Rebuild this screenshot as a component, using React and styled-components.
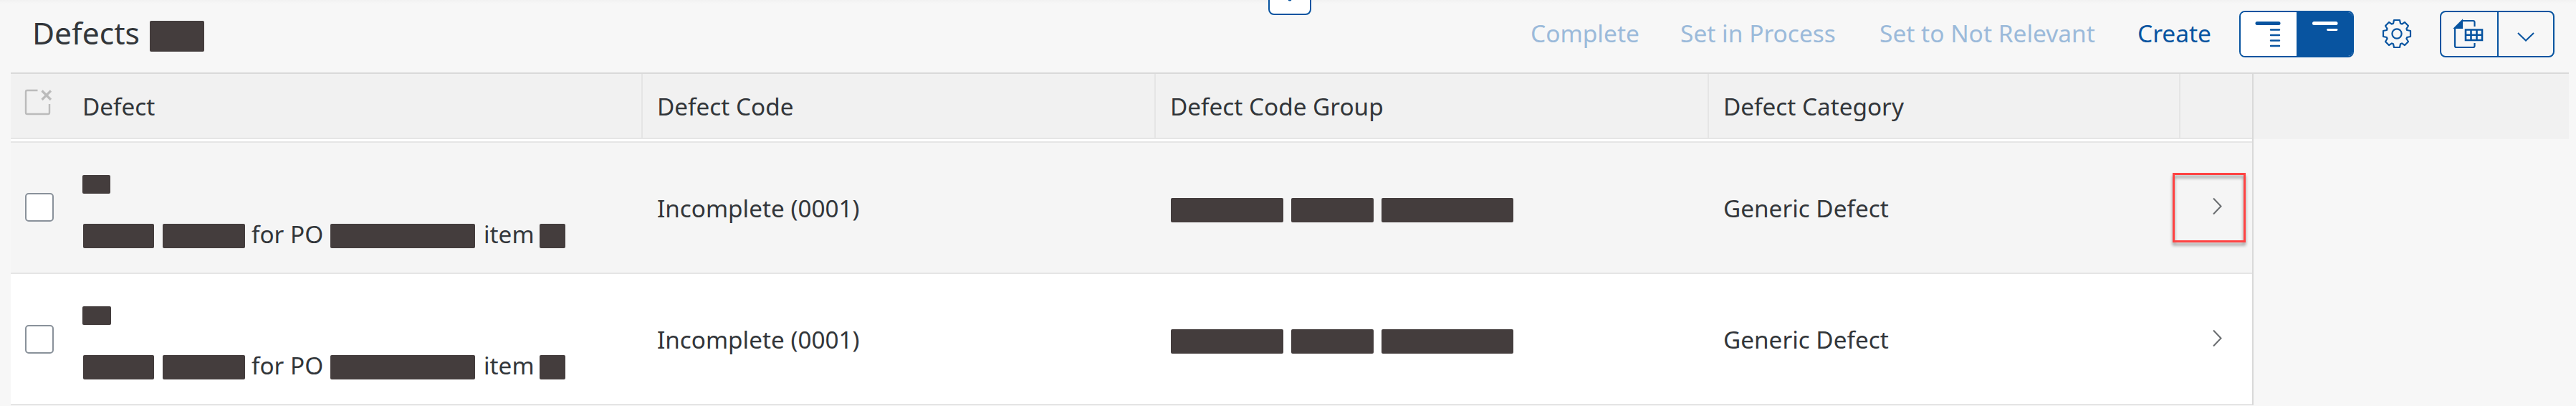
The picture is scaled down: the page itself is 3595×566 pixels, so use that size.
import React from "react";
import styled, { createGlobalStyle } from "styled-components";

const Global = createGlobalStyle`
  * { box-sizing: border-box; }
  body { margin: 0; background: #f7f7f7; color: #32363a; font-family: "Noto Sans", sans-serif; font-size: 33.3px; }
`;

const Page = styled.div`
  position: relative;
  height: 566px;
  overflow: hidden;
  padding-left: 15px;
  background: linear-gradient(#f2f2f2, #f7f7f7 5px);
`;

const PinButton = styled.div`
  position: absolute;
  left: 1770px;
  top: -39px;
  width: 60px;
  height: 60px;
  border: 2px solid #0854a0;
  border-radius: 8px;
  background: #fff;
`;

const Toolbar = styled.div`
  height: 101px;
  display: flex;
  align-items: flex-start;
  padding: 15px 30px 0 30px;
`;

const Title = styled.div`
  font-size: 42.6px;
  line-height: 60px;
  width: 164px;
  white-space: nowrap;
`;

const Redacted = styled.span`
  display: block;
  flex: none;
  width: ${(p) => p.$w}px;
  height: ${(p) => p.$h || 34}px;
  margin-left: ${(p) => p.$gap || 0}px;
  margin-top: ${(p) => p.$top || 0}px;
  border-radius: 2px;
  background: #443d3d;
`;

const Spacer = styled.div`
  flex: 1;
`;

const Action = styled.div`
  color: ${(p) => (p.$enabled ? "#0854a0" : "#9bbada")};
  width: ${(p) => p.$w}px;
  font-size: 33.5px;
  line-height: 62px;
  white-space: nowrap;
`;

const ButtonPair = styled.div`
  display: flex;
  width: 160px;
  height: 65px;
  border: 2px solid #0854a0;
  border-radius: 8px;
  overflow: hidden;
`;

const PairHalf = styled.div`
  flex: 1;
  display: flex;
  background: ${(p) => p.$bg || "transparent"};
  border-left: ${(p) => (p.$divided ? "2px solid #0854a0" : "none")};
`;

const GearSlot = styled.div`
  width: 120px;
  padding: 12px 0 0 40px;
`;

const Table = styled.div`
  display: grid;
  grid-template-columns: 3130px 440px;
`;

const HeaderRow = styled.div`
  display: flex;
  height: 93px;
  border-top: 2px solid #d9d9d9;
  border-bottom: 2px solid #e5e5e5;
  background: #f1f1f1;
  line-height: 90px;
`;

const HeaderFill = styled.div`
  height: 93px;
  background: #f1f1f1;
  border-top: 2px solid #d9d9d9;
`;

const Body = styled.div`
  border-right: 2px solid #d9d9d9;
  background: #fff;
  padding-top: 3px;
`;

const HeaderBlock = styled.div`
  border-right: 2px solid #d9d9d9;
`;

const Cell = styled.div`
  width: ${(p) => p.$w}px;
  padding-left: ${(p) => p.$pad ?? 20}px;
  border-right: ${(p) => (p.$ruled ? "2px solid #e5e5e5" : "none")};
  white-space: nowrap;
  flex: none;
`;

const Row = styled.div`
  position: relative;
  display: flex;
  height: 183px;
  border-top: 2px solid #e5e5e5;
  background: ${(p) => (p.$hovered ? "#f5f5f5" : "#fff")};
  line-height: 46px;
`;

const LastRule = styled.div`
  height: 2px;
  background: #e5e5e5;
`;

const Checkbox = styled.div`
  width: 40px;
  height: 40px;
  margin-top: ${(p) => p.$top}px;
  border: 2px solid #89919a;
  border-radius: 5px;
  background: #fff;
`;

const Line = styled.div`
  display: flex;
  height: 34px;
  margin-top: ${(p) => p.$top}px;
`;

const Word = styled.span`
  width: ${(p) => p.$w}px;
  margin-left: ${(p) => p.$gap}px;
  line-height: 28px;
`;

const CellText = styled.div`
  margin-top: 68px;
`;

const Highlight = styled.div`
  position: absolute;
  left: 3017px;
  top: 42px;
  width: 102px;
  height: 97px;
  border: 3px solid #ff4343;
  filter: drop-shadow(0 4px 2px rgba(0, 0, 0, 0.4));
`;

const Drawing = styled.svg`
  display: block;
  flex: none;
  overflow: visible;
`;

function ClearIcon() {
  return (
    <Drawing width="40" height="89" fill="none" stroke="#bbb" strokeWidth="2.4">
      <path d="M17.5 23H3a2 2 0 0 0-2 2V54a2 2 0 0 0 2 2H32a2 2 0 0 0 2-2V42" />
      <path d="M23.500 23.500L36 36M36 23.500L23.500 36" strokeWidth="3.2" />
    </Drawing>
  );
}

function PinTip() {
  return (
    <Drawing width="56" height="56" fill="#0854a0">
      <circle cx="28" cy="36" r="2.500" />
    </Drawing>
  );
}

function ExpandIcon() {
  return (
    <Drawing width="78" height="61" stroke="#0854a0" strokeLinecap="round">
      <path d="M23 15.5H53" strokeWidth="5" />
      <path d="M42 24.5H54M42 32H54M42 39.5H54M42 47H54" strokeWidth="2.4" />
    </Drawing>
  );
}

function CollapseIcon() {
  return (
    <Drawing width="78" height="61" stroke="#fff" strokeLinecap="round">
      <path d="M24.5 15.5H55" strokeWidth="5" />
      <path d="M43.500 24.5H56" strokeWidth="2.8" />
    </Drawing>
  );
}

function GearIcon() {
  return (
    <Drawing width="40" height="40" viewBox="-20 -20 40 40" fill="none" stroke="#0854a0" strokeWidth="2.2" strokeLinejoin="round">
      <path d="M-4-19H4L5-14.2L7-13.4L11-16L16-11L13.4-7L14.2-5L19-4V4L14.2 5L13.4 7L16 11L11 16L7 13.4L5 14.2L4 19H-4L-5 14.2L-7 13.4L-11 16L-16 11L-13.4 7L-14.2 5L-19 4V-4L-14.2-5L-13.4-7L-16-11L-11-16L-7-13.4L-5-14.2Z" />
      <circle r="6.6" />
    </Drawing>
  );
}

function SheetIcon() {
  return (
    <Drawing width="78" height="61" fill="none" stroke="#0854a0" strokeWidth="2.2">
      <path d="M46.500 20V14a2 2 0 0 0-2-2H29L19 22V47a2 2 0 0 0 2 2H44.500a2 2 0 0 0 2-2V43" />
      <path d="M29 12V22H19Z" fill="#0854a0" />
      <path d="M34 24.500H57V39H34ZM34 31.800H57M41.500 24.500V39M49.500 24.500V39" strokeWidth="2.6" />
    </Drawing>
  );
}

function DownIcon() {
  return (
    <Drawing width="76" height="61" fill="none" stroke="#0854a0" strokeWidth="2">
      <path d="M27 29L38 39.500L49 29" />
    </Drawing>
  );
}

function NavIcon({ shift }) {
  return (
    <Drawing width="40" height="180" fill="none" stroke="#6a6d70" strokeWidth="2">
      <path d="M1 77.500L11.500 88.500L1 99.500" transform={`translate(0 ${shift})`} />
    </Drawing>
  );
}

function DefectRow({ hovered, badge, shift = 0 }) {
  return (
    <Row $hovered={hovered}>
      <Cell $w={100} $pad={20}>
        <Checkbox $top={70 + shift} />
      </Cell>
      <Cell $w={782} $pad={0}>
        <Line $top={45}>
          <Redacted $w={badge} $h={26} />
        </Line>
        <Line $top={34}>
          <Redacted $w={99} $gap={1} />
          <Redacted $w={115} $gap={12} />
          <Word $w={99} $gap={9}>for PO</Word>
          <Redacted $w={202} $gap={11} />
          <Word $w={67} $gap={12}>item</Word>
          <Redacted $w={36} $gap={11} />
        </Line>
      </Cell>
      <Cell $w={716}>
        <CellText>Incomplete (0001)</CellText>
      </Cell>
      <Cell $w={772}>
        <Line $top={77}>
          <Redacted $w={157} $gap={1} />
          <Redacted $w={115} $gap={11} />
          <Redacted $w={184} $gap={11} />
        </Line>
      </Cell>
      <Cell $w={658}>
        <CellText>Generic Defect</CellText>
      </Cell>
      <Cell $w={100} $pad={45}>
        <NavIcon shift={shift} />
      </Cell>
      {hovered && <Highlight />}
    </Row>
  );
}

export default function App() {
  return (
    <Page>
      <Global />
      <PinButton><PinTip /></PinButton>
      <Toolbar>
        <Title>Defects</Title>
        <Redacted $w={76} $h={43} $top={14} />
        <Spacer />
        <Action $w={209}>Complete</Action>
        <Action $w={278}>Set in Process</Action>
        <Action $w={360}>Set to Not Relevant</Action>
        <Action $w={142} $enabled>Create</Action>
        <ButtonPair>
          <PairHalf $bg="#fff"><ExpandIcon /></PairHalf>
          <PairHalf $bg="#0854a0"><CollapseIcon /></PairHalf>
        </ButtonPair>
        <GearSlot><GearIcon /></GearSlot>
        <ButtonPair>
          <PairHalf><SheetIcon /></PairHalf>
          <PairHalf $divided><DownIcon /></PairHalf>
        </ButtonPair>
      </Toolbar>
      <Table>
        <HeaderBlock>
          <HeaderRow>
            <Cell $w={100} $pad={20}><ClearIcon /></Cell>
            <Cell $w={782} $pad={0} $ruled>Defect</Cell>
            <Cell $w={716} $ruled>Defect Code</Cell>
            <Cell $w={772} $ruled>Defect Code Group</Cell>
            <Cell $w={658} $ruled>Defect Category</Cell>
          </HeaderRow>
        </HeaderBlock>
        <HeaderFill />
        <Body>
          <DefectRow hovered badge={39} />
          <DefectRow badge={40} shift={1} />
          <LastRule />
        </Body>
      </Table>
    </Page>
  );
}
